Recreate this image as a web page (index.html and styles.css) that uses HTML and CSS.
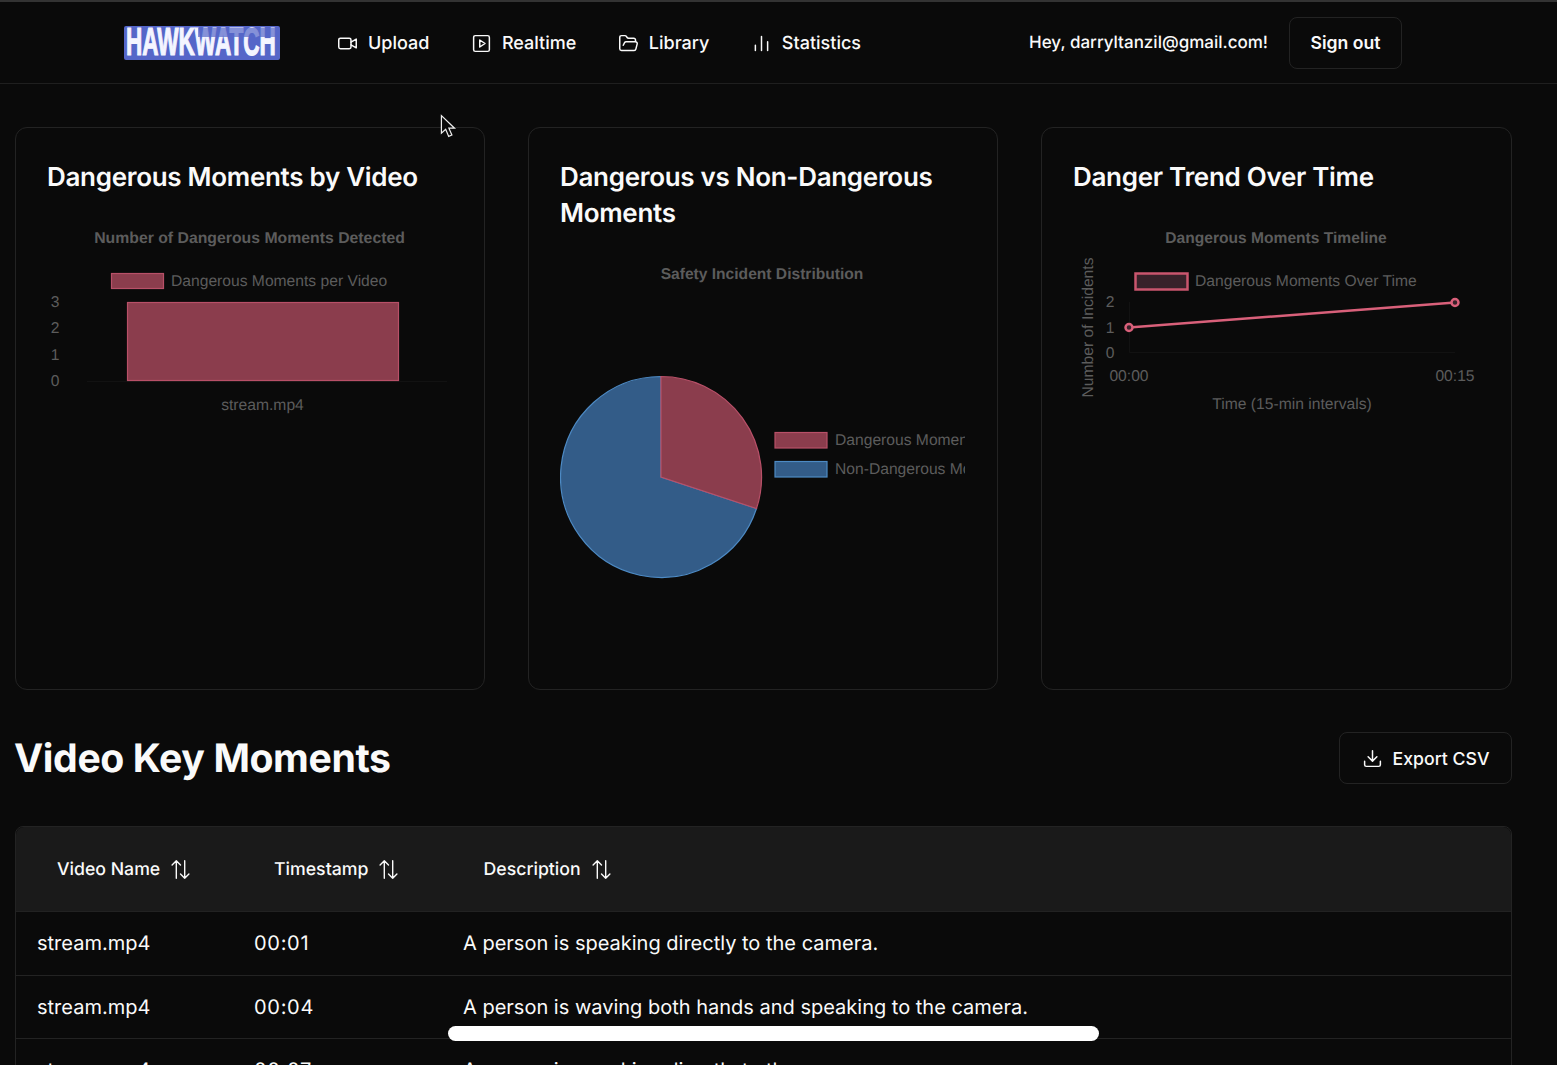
FILE: index.html
```html
<!DOCTYPE html>
<html lang="en">
<head>
<meta charset="utf-8">
<title>Hawkwatch Statistics</title>
<link rel="stylesheet" href="styles.css">
</head>
<body>
<header class="topbar">
  <div class="logo"><span class="logo-text">HAWKWATCH</span><span class="logo-band"></span></div>
  <nav class="nav">
    <a class="nav-item"><svg class="ico" viewBox="0 0 24 24"><rect x="2" y="6" width="14" height="12" rx="2"/><path d="M16 10.500 22 7v10l-6-3.500"/></svg>Upload</a>
    <a class="nav-item"><svg class="ico" viewBox="0 0 24 24"><rect x="3" y="3" width="18" height="18" rx="2"/><path d="m10 8 6 4-6 4z"/></svg>Realtime</a>
    <a class="nav-item"><svg class="ico" viewBox="0 0 24 24"><path d="M6 14l1.500-2.900A2 2 0 0 1 9.240 10H20a2 2 0 0 1 1.940 2.500l-1.540 6a2 2 0 0 1-1.950 1.500H4a2 2 0 0 1-2-2V5a2 2 0 0 1 2-2h3.900a2 2 0 0 1 1.690.9l.81 1.200a2 2 0 0 0 1.670.9H18a2 2 0 0 1 2 2v2"/></svg>Library</a>
    <a class="nav-item"><svg class="ico" viewBox="0 0 24 24"><path d="M5 20v-6M12 20V4M19 20v-10"/></svg>Statistics</a>
  </nav>
  <div class="account">
    <span class="greet">Hey, darryltanzil@gmail.com!</span>
    <button class="btn signout">Sign out</button>
  </div>
</header>

<main class="main">
  <section class="cards">
    <article class="card">
      <h2 class="card-title">Dangerous Moments by Video</h2>
      <svg class="chart" viewBox="0 0 406 200">
        <text class="c-title c-title-wide" x="202.500" y="23" text-anchor="middle">Number of Dangerous Moments Detected</text>
        <rect class="red-fill" x="64.500" y="53.500" width="52" height="15"/>
        <text class="c-text" x="124" y="65.500">Dangerous Moments per Video</text>
        <text class="c-text" x="8" y="86.500" text-anchor="middle">3</text>
        <text class="c-text" x="8" y="112.500" text-anchor="middle">2</text>
        <text class="c-text" x="8" y="139.500" text-anchor="middle">1</text>
        <text class="c-text" x="8" y="166" text-anchor="middle">0</text>
        <path class="axis" d="M40 161.500H400"/>
        <rect class="red-fill" x="80.500" y="82.500" width="271" height="78"/>
        <text class="c-text" x="215.500" y="189.500" text-anchor="middle">stream.mp4</text>
      </svg>
    </article>

    <article class="card">
      <h2 class="card-title">Dangerous vs Non-Dangerous Moments</h2>
      <svg class="chart" viewBox="0 0 406 340">
        <text class="c-title" x="202" y="23" text-anchor="middle">Safety Incident Distribution</text>
        <path class="blue-fill" d="M101 221V120.500A100.500 100.500 0 1 0 196.500 252.500Z"/>
        <path class="red-fill" d="M101 221V120.500A100.500 100.500 0 0 1 196.500 252.500Z"/>
        <rect class="red-fill" x="215" y="176.500" width="52" height="15.500"/>
        <rect class="blue-fill" x="215" y="205.500" width="52" height="15.500"/>
        <svg x="0" y="0" width="405" height="340">
          <text class="c-text" x="275" y="188.500">Dangerous Moments</text>
          <text class="c-text" x="275" y="217.500">Non-Dangerous Moments</text>
        </svg>
      </svg>
    </article>

    <article class="card">
      <h2 class="card-title">Danger Trend Over Time</h2>
      <svg class="chart" viewBox="0 0 406 200">
        <text class="c-title" x="203" y="23" text-anchor="middle">Dangerous Moments Timeline</text>
        <text class="c-text" transform="translate(20 107.500) rotate(-90)" text-anchor="middle">Number of Incidents</text>
        <rect class="line-box" x="62.500" y="53.500" width="52" height="16"/>
        <text class="c-text" x="122" y="65.500">Dangerous Moments Over Time</text>
        <text class="c-text" x="37" y="86.500" text-anchor="middle">2</text>
        <text class="c-text" x="37" y="112.500" text-anchor="middle">1</text>
        <text class="c-text" x="37" y="137.500" text-anchor="middle">0</text>
        <path class="axis" d="M56.500 82V132.500H382"/>
        <path class="line" d="M56 107.500 382 82.500"/>
        <circle class="dot" cx="56" cy="107.500" r="3.500"/>
        <circle class="dot" cx="382" cy="82.500" r="3.500"/>
        <text class="c-text" x="56" y="160.500" text-anchor="middle">00:00</text>
        <text class="c-text" x="382" y="160.500" text-anchor="middle">00:15</text>
        <text class="c-text" x="219" y="188.500" text-anchor="middle">Time (15-min intervals)</text>
      </svg>
    </article>
  </section>

  <section class="moments-head">
    <h1 class="moments-title">Video Key Moments</h1>
    <button class="btn export">
      <svg class="ico" viewBox="0 0 24 24"><path d="M12 3v12M7 10l5 5 5-5M3 15v4a2 2 0 0 0 2 2h14a2 2 0 0 0 2-2v-4"/></svg>
      Export CSV
    </button>
  </section>

  <section class="table">
    <div class="row head">
      <div class="th"><span>Video Name</span><svg class="sort" viewBox="0 0 24 24"><path d="M7.200 22V2M2.400 6.800 7.200 2 12 6.800M16.800 2V22M12 17.200l4.800 4.800 4.800-4.800"/></svg></div>
      <div class="th"><span>Timestamp</span><svg class="sort" viewBox="0 0 24 24"><path d="M7.200 22V2M2.400 6.800 7.200 2 12 6.800M16.800 2V22M12 17.200l4.800 4.800 4.800-4.800"/></svg></div>
      <div class="th"><span>Description</span><svg class="sort" viewBox="0 0 24 24"><path d="M7.200 22V2M2.400 6.800 7.200 2 12 6.800M16.800 2V22M12 17.200l4.800 4.800 4.800-4.800"/></svg></div>
    </div>
    <div class="row"><div>stream.mp4</div><div class="time">00:01</div><div>A person is speaking directly to the camera.</div></div>
    <div class="row"><div>stream.mp4</div><div class="time">00:04</div><div>A person is waving both hands and speaking to the camera.</div></div>
    <div class="row"><div>stream.mp4</div><div class="time">00:07</div><div>A person is speaking directly to the camera.</div></div>
  </section>
</main>

<div class="pill"></div>
<svg class="cursor" viewBox="0 0 18 26"><path d="M1.500 1.500V20l4.500-4 3.200 7.500 3.400-1.500-3.200-7.200h6z"/></svg>
</body>
</html>
```
FILE: styles.css
```css
* { box-sizing: border-box; }
html, body { height: 1065px; overflow: hidden; }
body {
  margin: 0;
  background: #0a0a0a;
  color: #fafafa;
  font-family: Inter, "Liberation Sans", sans-serif;
  border-top: 2px solid #333;
  text-rendering: geometricPrecision;
}
.topbar {
  height: 82px;
  display: flex;
  align-items: center;
  padding: 0 155px 0 124px;
  border-bottom: 1px solid #1f1f1f;
}
.logo {
  position: relative;
  width: 156px;
  height: 34px;
  flex: none;
  background: #5566c8;
  border-radius: 2px;
  padding-left: 2px;
}
.logo-text {
  display: block;
  width: 270px;
  transform: scaleX(0.578);
  transform-origin: left center;
  font-family: "Liberation Sans", sans-serif;
  font-weight: 700;
  font-size: 39px;
  line-height: 34px;
  white-space: nowrap;
  color: #f4f5ff;
  -webkit-text-stroke: 1.200px #f4f5ff;
}
.logo-band {
  position: absolute;
  left: 74px;
  top: 2px;
  width: 80px;
  height: 9px;
  background: rgba(85, 102, 200, 0.7);
}
.nav { display: flex; gap: 41.500px; margin-left: 57px; padding-top: 2px; }
.nav-item { display: flex; align-items: center; gap: 10px; font-size: 18px; font-weight: 500; }
.ico { width: 21px; height: 21px; fill: none; stroke: currentColor; stroke-width: 1.700; stroke-linecap: round; stroke-linejoin: round; }
.account { margin-left: auto; display: flex; align-items: center; gap: 21px; }
.greet { font-size: 17px; font-weight: 500; }
.btn {
  background: transparent;
  color: #fafafa;
  font: 600 18px Inter, "Liberation Sans", sans-serif;
  border: 1px solid #232323;
  border-radius: 8px;
  display: flex;
  align-items: center;
  justify-content: center;
}
.signout { width: 113px; height: 52px; font-size: 17.600px; }
.export { width: 173px; height: 52px; gap: 10px; font-size: 17.700px; font-weight: 500; }

.main { padding: 43px 45px 0 15px; }
.cards { display: grid; grid-template-columns: 470px 470px 471px; gap: 43px; }
.card {
  height: 563px;
  border: 1px solid #232323;
  border-radius: 12px;
  padding: 32px 31px 0;
}
.card-title { margin: 0 0 24px; font-size: 26px; font-weight: 600; line-height: 36px; letter-spacing: -0.300px; }
.chart { display: block; width: 406px; overflow: hidden; }
.c-title { font: 700 15.600px "Liberation Sans", sans-serif; fill: #5c5c5c; }
.c-title-wide { font-size: 15.800px; }
.c-text { font: 15.650px "Liberation Sans", sans-serif; fill: #5c5c5c; }
.red-fill { fill: #8b3d4d; stroke: #b85068; stroke-width: 1.200; }
.blue-fill { fill: #335c88; stroke: #4d8ac4; stroke-width: 1.200; }
.line-box { fill: #38222a; stroke: #c9566e; stroke-width: 2.500; }
.axis { fill: none; stroke: #121212; }
.line { fill: none; stroke: #d9607a; stroke-width: 2.500; }
.dot { fill: #38222a; stroke: #d9607a; stroke-width: 2.500; }

.moments-head { display: flex; align-items: center; justify-content: space-between; margin-top: 42px; height: 52px; }
.moments-title { margin: 0 0 0 -1px; font-size: 39.200px; font-weight: 700; letter-spacing: -0.400px; }

.table { margin-top: 42px; border: 1px solid #232323; border-radius: 8px 8px 0 0; }
.row {
  display: grid;
  grid-template-columns: 217px 209px 1fr;
  height: 63.500px;
  align-items: center;
  padding-left: 21px;
  font-size: 20px;
  border-bottom: 1px solid #232323;
}
.time { letter-spacing: 0.700px; }
.row.head {
  grid-template-columns: 217px 209.500px 1fr;
  height: 85px;
  background: #1a1a1a;
  font-size: 17.700px;
  font-weight: 500;
  padding: 0 0 0 41px;
  border-bottom: 1px solid #222;
  border-radius: 8px 8px 0 0;
}
.th { display: flex; align-items: center; gap: 10px; }
.sort { width: 21px; height: 21px; fill: none; stroke: currentColor; stroke-width: 1.600; stroke-linecap: round; stroke-linejoin: round; }

.pill { position: fixed; left: 448px; top: 1026px; width: 651px; height: 15px; border-radius: 8px; background: #fff; }
.cursor { position: fixed; left: 440px; top: 114px; width: 17px; height: 25px; fill: #0a0a0a; stroke: #eee; stroke-width: 1.300; }
```
